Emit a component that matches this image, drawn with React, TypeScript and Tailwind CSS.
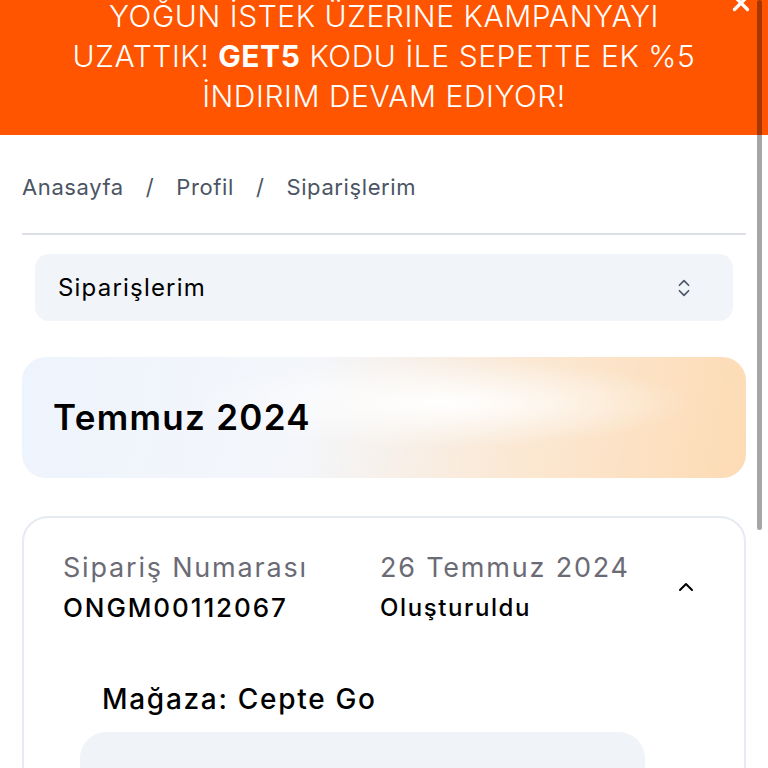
import { ChevronUp, ChevronsUpDown, X } from "lucide-react";

const font = { fontFamily: "Inter, 'Noto Sans', sans-serif" };

function PromoBanner() {
  return (
    <div className="relative h-[135px] w-full overflow-hidden bg-[#ff5500] flex items-end justify-center pb-[19px]">
      <p className="text-center uppercase text-white text-[30px] leading-[40px] font-light px-[50px] tracking-[0.55px]">
        Yoğun İstek Üzerine Kampanyayı Uzattık! <span className="font-bold">GET5</span> Kodu İle Sepette Ek %5 İndirim Devam Ediyor!
      </p>
      <X className="absolute right-[14px] -top-[10px] text-white" size={26} strokeWidth={3} />
    </div>
  );
}

function Breadcrumb() {
  return (
    <div className="flex items-center gap-[22px] text-[22px] tracking-[0.6px] text-[#4b5563] pt-[36px] pb-[29px] border-b-2 border-[#dcdfe4]">
      <span>Anasayfa</span>
      <span>/</span>
      <span>Profil</span>
      <span>/</span>
      <span>Siparişlerim</span>
    </div>
  );
}

function OrderCard() {
  return (
    <div className="mt-[38px] rounded-[26px] border-2 border-[#e6eaf1] pt-[32px]">
      <div className="flex items-center pl-[39px] pr-[46px]">
        <div className="w-[317px]">
          <div className="text-[27px] leading-[36px] tracking-[1.8px] text-[#6b6b75]">Sipariş Numarası</div>
          <div className="mt-[4px] text-[26px] leading-[36px] tracking-[1.9px] font-medium text-black">ONGM00112067</div>
        </div>
        <div className="flex-1">
          <div className="text-[27px] leading-[36px] tracking-[1.8px] text-[#6b6b75]">26 Temmuz 2024</div>
          <div className="mt-[4px] text-[24px] leading-[36px] tracking-[1.6px] font-medium text-black">Oluşturuldu</div>
        </div>
        <ChevronUp size={24} strokeWidth={2} className="text-black -mt-[2px]" />
      </div>
      <div className="pl-[78px] pt-[53px] text-[28px] tracking-[1.7px] font-medium text-black leading-[40px]">Mağaza: Cepte Go</div>
      <div className="ml-[56px] mr-[99px] mt-[13px] h-[60px] rounded-t-[26px] bg-[#f0f3f8]" />
    </div>
  );
}

export default function App() {
  return (
    <div className="relative w-[768px] h-[768px] overflow-hidden bg-white" style={font}>
      <PromoBanner />
      <div className="px-[22px]">
        <Breadcrumb />
        <div className="mx-[13px] mt-[19px] h-[67px] rounded-[14px] bg-[#f1f4f9] flex items-center justify-between pl-[23px] pr-[38px]">
          <span className="text-[24px] tracking-[1.2px] text-black">Siparişlerim</span>
          <ChevronsUpDown size={22} strokeWidth={1.8} className="text-[#4b5563]" />
        </div>
        <div className="mt-[36px] h-[121px] rounded-[24px] flex items-center pl-[31px] bg-[radial-gradient(ellipse_at_58%_38%,#ffffff_0%,rgba(255,255,255,0)_42%),linear-gradient(100deg,#eef4fd_0%,#f4f6fa_40%,#fbe8d4_68%,#fddbb4_100%)]">
          <span className="text-[35px] font-semibold tracking-[1.3px] text-black">Temmuz 2024</span>
        </div>
        <OrderCard />
      </div>
      <div className="absolute right-[6px] top-0 h-[530px] w-[5px] rounded-full bg-black/35" />
    </div>
  );
}
